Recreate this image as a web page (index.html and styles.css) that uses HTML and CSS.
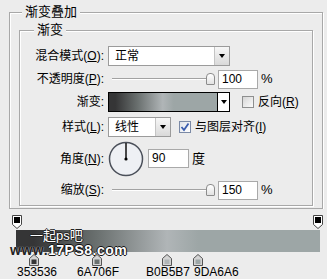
FILE: index.html
```html
<!DOCTYPE html>
<html lang="zh-CN">
<head>
    <meta charset="UTF-8">
    <meta name="viewport" content="width=device-width, initial-scale=1.0">
    <title>渐变叠加</title>
    <link rel="stylesheet" href="styles.css">
</head>
<body>
    <div class="dialog">
        <fieldset class="group outer">
            <legend>渐变叠加</legend>
            <fieldset class="group inner">
                <legend>渐变</legend>

                <div class="row row-mode">
                    <span class="lbl">混合模式(<u>O</u>):</span>
                    <div class="select select-mode"><span>正常</span><i class="arrow"></i></div>
                </div>

                <div class="row">
                    <span class="lbl">不透明度(<u>P</u>):</span>
                    <div class="slider"><i class="thumb"></i></div>
                    <div class="field">100</div>
                    <span class="unit">%</span>
                </div>

                <div class="row">
                    <span class="lbl">渐变:</span>
                    <div class="grad-pick"><div class="fill"></div><i class="drop"></i></div>
                    <i class="check"></i>
                    <span>反向(<u>R</u>)</span>
                </div>

                <div class="row row-style">
                    <span class="lbl">样式(<u>L</u>):</span>
                    <div class="select select-style"><span>线性</span><i class="arrow"></i></div>
                    <i class="check check-on">
                        <svg width="10" height="10" viewBox="0 0 10 10"><polyline points="1.5,5 4,8 8.5,1.5" fill="none" stroke="#3a5dae" stroke-width="1.8"/></svg>
                    </i>
                    <span>与图层对齐(<u>I</u>)</span>
                </div>

                <div class="row row-angle">
                    <span class="lbl">角度(<u>N</u>):</span>
                    <svg class="dial" width="36" height="36" viewBox="0 0 36 36">
                        <circle cx="18" cy="18" r="16.5" fill="#eef0f4" stroke="#4b505a" stroke-width="1.5"/>
                        <line x1="18" y1="18" x2="18" y2="2" stroke="#111" stroke-width="1.5"/>
                        <circle cx="18" cy="18" r="1.6" fill="#000"/>
                    </svg>
                    <div class="field field-angle">90</div>
                    <span class="unit">度</span>
                </div>

                <div class="row row-scale">
                    <span class="lbl">缩放(<u>S</u>):</span>
                    <div class="slider"><i class="thumb"></i></div>
                    <div class="field">150</div>
                    <span class="unit">%</span>
                </div>
            </fieldset>
        </fieldset>
    </div>

    <div class="editor">
        <div class="ostops">
            <svg width="10" height="14" viewBox="0 0 10 14"><path d="M0.5 0.5H9.5V9.5L5 13.5L0.5 9.5Z" fill="#fff" stroke="#444"/><rect x="2" y="2" width="6" height="6" fill="#000"/></svg>
            <svg width="10" height="14" viewBox="0 0 10 14"><path d="M0.5 0.5H9.5V9.5L5 13.5L0.5 9.5Z" fill="#fff" stroke="#444"/><rect x="2" y="2" width="6" height="6" fill="#000"/></svg>
        </div>

        <div class="bar">
            <span class="mark-cn">一起ps吧</span>
            <span class="mark-url"><b>www.</b>17PS8.com</span>
        </div>

        <div class="cstops">
            <svg class="cstop" style="left:5.9%" width="10" height="12" viewBox="0 0 10 12"><path d="M5 0.5L9.5 4.5V11.5H0.5V4.5Z" fill="#d4d4d4" stroke="#555"/><rect x="2.5" y="5.5" width="5" height="4.5" fill="#353536"/></svg>
            <svg class="cstop" style="left:26.6%" width="10" height="12" viewBox="0 0 10 12"><path d="M5 0.5L9.5 4.5V11.5H0.5V4.5Z" fill="#d4d4d4" stroke="#555"/><rect x="2.5" y="5.5" width="5" height="4.5" fill="#6a706f"/></svg>
            <svg class="cstop" style="left:49.7%" width="10" height="12" viewBox="0 0 10 12"><path d="M5 0.5L9.5 4.5V11.5H0.5V4.5Z" fill="#d4d4d4" stroke="#555"/><rect x="2.5" y="5.5" width="5" height="4.5" fill="#b0b5b7"/></svg>
            <svg class="cstop" style="left:59.9%" width="10" height="12" viewBox="0 0 10 12"><path d="M5 0.5L9.5 4.5V11.5H0.5V4.5Z" fill="#d4d4d4" stroke="#555"/><rect x="2.5" y="5.5" width="5" height="4.5" fill="#9da6a6"/></svg>
        </div>

        <div class="codes">
            <span style="left:1px">353536</span>
            <span style="left:61px">6A706F</span>
            <span style="left:130px">B0B5B7</span>
            <span style="left:178px">9DA6A6</span>
        </div>
    </div>
</body>
</html>
```

FILE: styles.css
```css
body {
    margin: 0;
    width: 327px;
    height: 279px;
    overflow: hidden;
    background-color: #ececec;
    color: #000;
    font-family: "Liberation Sans", "Noto Sans CJK SC", sans-serif;
    font-size: 12px;
    line-height: 14px;
}
u {
    text-decoration: underline;
}

/* layer style dialog, cut off at the bottom */
.dialog {
    height: 209px;
    overflow: hidden;
}
.group {
    margin: 0;
    padding: 0;
    min-width: 0;
    border: 1px solid #a8a8a8;
    box-shadow: 1px 1px 0 #fff, inset 1px 1px 0 #fff;
}
.group legend {
    padding: 0 3px;
    font-size: 13px;
    line-height: 16px;
    background-color: #ececec;
}
.outer {
    margin: 4px 4px 0 9px;
    padding: 0 9px;
}
.outer > legend {
    margin-left: 3px;
}
.inner {
    margin: 2px 0 2px 0;
    padding: 0 0 5px 0;
}
.inner > legend {
    margin-left: 14px;
}

.row {
    display: flex;
    align-items: center;
    height: 20px;
    margin-top: 3px;
}
.row-mode {
    margin-top: 8px;
}
.row-style {
    margin-top: 5px;
}
.row-angle {
    height: 35px;
    margin-top: 4px;
}
.row-scale {
    margin-top: 4px;
}
.lbl {
    flex: none;
    width: 84px;
    margin-right: 4px;
    text-align: right;
    white-space: nowrap;
}

.select {
    display: flex;
    height: 20px;
    box-sizing: border-box;
    border: 1px solid #9b9b9b;
    background-color: #fff;
}
.select span {
    flex: 1;
    padding-left: 6px;
    line-height: 18px;
}
.select .arrow {
    width: 14px;
    display: flex;
    align-items: center;
    justify-content: center;
    border-left: 1px solid #c4c4c4;
    background: linear-gradient(#f7f7f7, #d9d9d9);
}
.select .arrow::after {
    content: "";
    border-left: 3.5px solid transparent;
    border-right: 3.5px solid transparent;
    border-top: 4px solid #000;
}
.select-mode {
    width: 122px;
}
.select-style {
    width: 63px;
}

.slider {
    position: relative;
    flex: none;
    width: 108px;
    height: 14px;
    margin-right: 2px;
}
.slider::before {
    content: "";
    position: absolute;
    left: 4px;
    right: 6px;
    top: 6px;
    border-top: 1px solid #a2a2a2;
    border-bottom: 1px solid #fff;
}
.thumb {
    position: absolute;
    right: 1px;
    top: 1px;
    width: 9px;
    height: 12px;
    box-sizing: border-box;
    border: 1px solid #8c8c8c;
    border-radius: 4px 4px 1px 1px;
    background: linear-gradient(#fff, #e2e2e2);
}

.field {
    width: 40px;
    height: 19px;
    box-sizing: border-box;
    padding-left: 3px;
    border: 1px solid #a9a9a9;
    background-color: #fff;
    line-height: 17px;
}
.field-angle {
    width: 41px;
}
.unit {
    margin-left: 3px;
    font-size: 13px;
}

.grad-pick {
    display: flex;
    width: 122px;
    height: 20px;
    box-sizing: border-box;
    border: 1px solid #000;
}
.grad-pick .fill {
    flex: 1;
    background: linear-gradient(to right, #353536 5.9%, #6a706f 26.6%, #b0b5b7 49.7%, #9da6a6 59.9%);
}
.grad-pick .drop {
    width: 11px;
    display: flex;
    align-items: center;
    justify-content: center;
    border-left: 1px solid #000;
    background-color: #fff;
}
.grad-pick .drop::after {
    content: "";
    border-left: 3px solid transparent;
    border-right: 3px solid transparent;
    border-top: 4px solid #000;
}

.check {
    display: flex;
    align-items: center;
    justify-content: center;
    flex: none;
    width: 12px;
    height: 12px;
    box-sizing: border-box;
    margin: 0 4px 0 12px;
    border: 1px solid #8e8f8f;
    background: linear-gradient(135deg, #d6d6d6, #fbfbfb);
}
.check-on {
    margin-left: 8px;
    border-color: #7b8aa6;
    background: linear-gradient(135deg, #dfe3ea, #fff);
}

.dial {
    flex: none;
    margin-right: 4px;
}

/* gradient editor strip */
.editor {
    padding: 6px 4px 0 12px;
}
.ostops {
    display: flex;
    justify-content: space-between;
    height: 14px;
}
.bar {
    position: relative;
    width: 304px;
    height: 22px;
    margin: 1px 0 0 4px;
    background: linear-gradient(to right, #353536 5.9%, #6a706f 26.6%, #b0b5b7 49.7%, #9da6a6 59.9%);
}
.mark-cn {
    position: absolute;
    left: 14px;
    top: 0;
    font-size: 13px;
    line-height: 12px;
    color: #fff;
    text-shadow: -1px 0 #222, 1px 0 #222, 0 -1px #222, 0 1px #222;
}
.mark-url {
    position: absolute;
    left: -6px;
    top: 14px;
    font-size: 14px;
    font-weight: bold;
    line-height: 12px;
    letter-spacing: 0.5px;
    color: #fff;
    text-shadow: -1px 0 #111, 1px 0 #111, 0 -1px #111, 0 1px #111;
}
.mark-url b {
    color: #222;
    text-shadow: 0 0 1px #fff;
}
.cstops {
    position: relative;
    width: 304px;
    height: 12px;
    margin: 2px 0 0 4px;
}
.cstop {
    position: absolute;
    top: 0;
    margin-left: -5px;
}
.codes {
    position: relative;
    height: 13px;
    margin-left: 4px;
    line-height: 13px;
}
.codes span {
    position: absolute;
    top: 0;
}
```
